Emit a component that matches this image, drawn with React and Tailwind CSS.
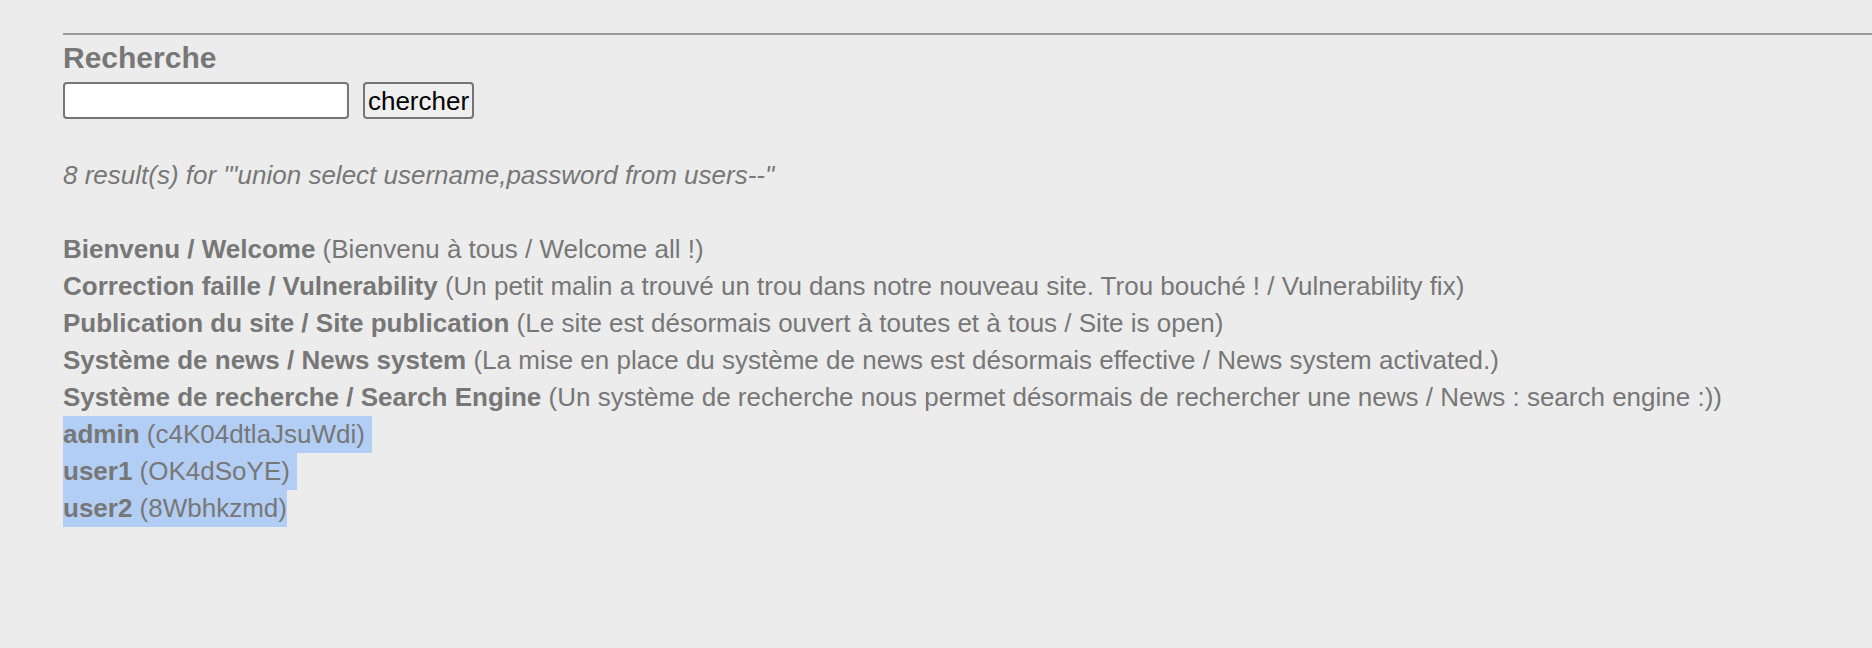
const NEWS = [
  ['Bienvenu / Welcome', 'Bienvenu à tous / Welcome all !'],
  ['Correction faille / Vulnerability', 'Un petit malin a trouvé un trou dans notre nouveau site. Trou bouché ! / Vulnerability fix'],
  ['Publication du site / Site publication', 'Le site est désormais ouvert à toutes et à tous / Site is open'],
  ['Système de news / News system', 'La mise en place du système de news est désormais effective / News system activated.'],
  ['Système de recherche / Search Engine', 'Un système de recherche nous permet désormais de rechercher une news / News : search engine :)'],
];

// rows that came back from the injected query, shown selected
const LEAKED = [
  ['admin', 'c4K04dtlaJsuWdi'],
  ['user1', 'OK4dSoYE'],
  ['user2', '8Wbhkzmd'],
];

export default function App() {
  return (
    <div className="min-h-[648px] bg-[#ececec] pl-[63px] pt-[33px] font-['Liberation_Sans',Arial,sans-serif] text-[26px] leading-[37px] text-[#777777]">
      <div className="h-[2px] bg-[#9a9a9a]" />

      <h3 className="mt-[6px] text-[30px] font-bold leading-[34px]">Recherche</h3>

      <form className="mt-[7px] flex items-center gap-[14px]" onSubmit={(e) => e.preventDefault()}>
        <input
          type="text"
          className="h-[37px] w-[286px] rounded-[4px] border-2 border-[#767676] bg-white px-1 text-[26px] text-black outline-none"
        />
        <button
          type="submit"
          className="flex h-[37px] w-[111px] items-center justify-center rounded-[4px] border-2 border-[#767676] bg-[#efefef] text-[26px] leading-none text-black"
        >
          chercher
        </button>
      </form>

      <p className="mt-[38px] italic">8 result(s) for "'union select username,password from users--"</p>

      <div className="mt-[37px]">
        {NEWS.map(([title, desc]) => (
          <div key={title}>
            <b>{title}</b> ({desc})
          </div>
        ))}
        {LEAKED.map(([name, pass], i) => (
          <div key={name} className="w-fit bg-[#b3cef5]">
            <b>{name}</b> ({pass}){i < LEAKED.length - 1 ? '\u00a0' : ''}
          </div>
        ))}
      </div>
    </div>
  );
}
